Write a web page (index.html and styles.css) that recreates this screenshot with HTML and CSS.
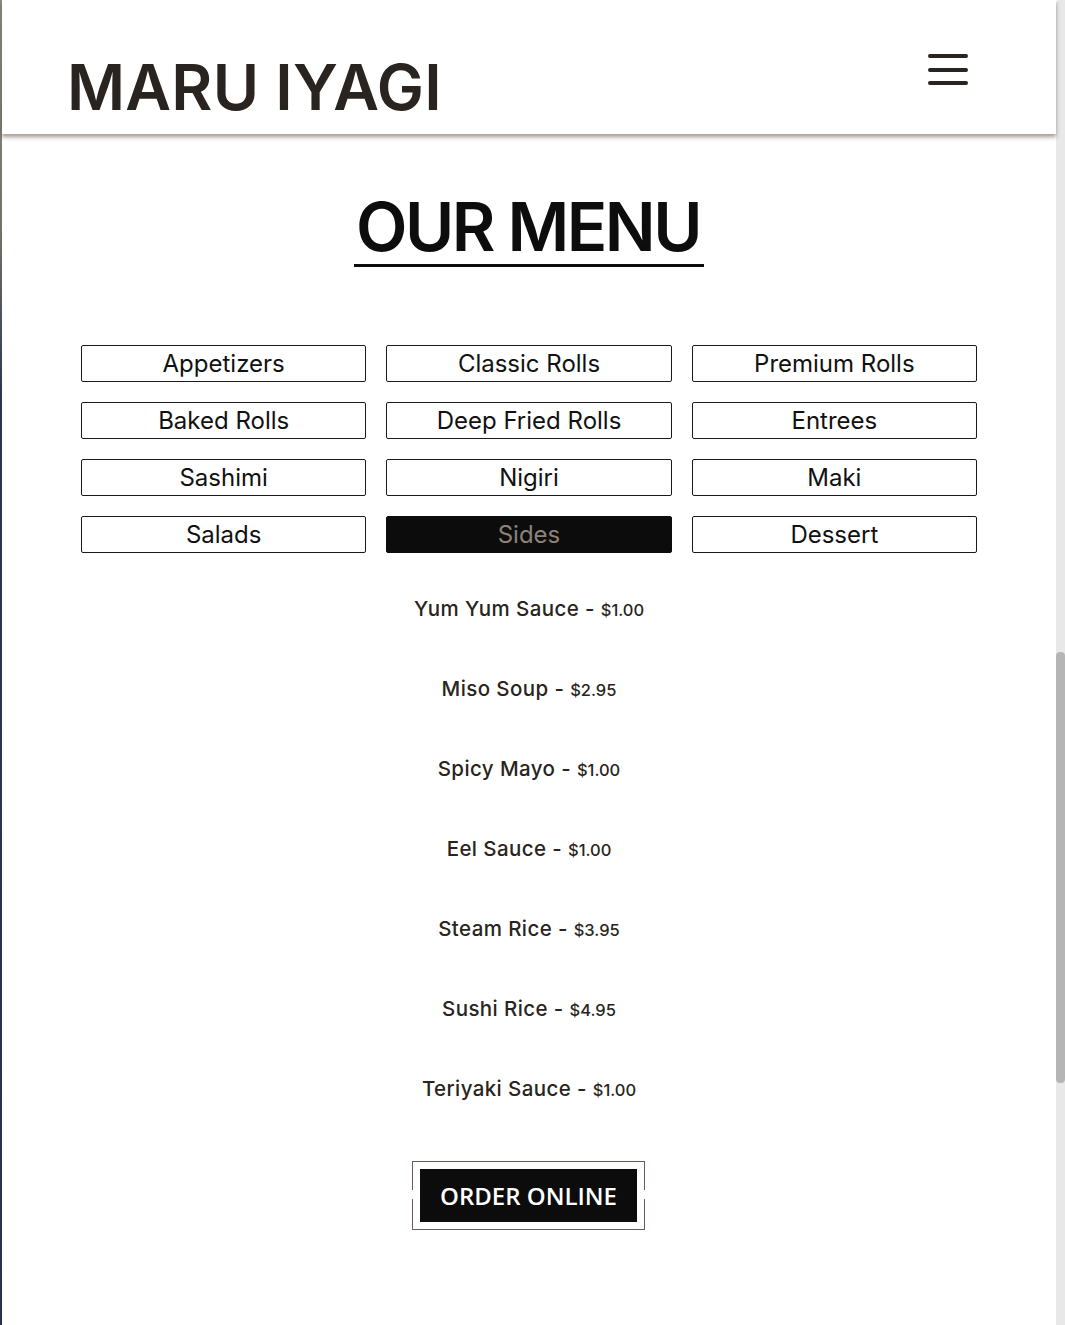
FILE: index.html
```html
<!DOCTYPE html>
<html lang="en">
<head>
  <meta charset="UTF-8">
  <title>Maru Iyagi - Our Menu</title>
  <link rel="stylesheet" href="styles.css">
</head>
<body>

  <div class="ventana">
    <div class="borde"></div>

    <div class="pagina">
      <header class="cabecera">
        <h1 class="logo">MARU IYAGI</h1>
        <button class="hamburguesa" aria-label="Menu">
          <svg width="40" height="31" viewBox="0 0 40 31">
            <line x1="2" y1="2" x2="38" y2="2" />
            <line x1="2" y1="16" x2="38" y2="16" />
            <line x1="2" y1="29" x2="38" y2="29" />
          </svg>
        </button>
      </header>

      <main class="menu">
        <h2 class="titulo">OUR MENU</h2>

        <div class="categorias">
          <button class="categoria">Appetizers</button>
          <button class="categoria">Classic Rolls</button>
          <button class="categoria">Premium Rolls</button>
          <button class="categoria">Baked Rolls</button>
          <button class="categoria">Deep Fried Rolls</button>
          <button class="categoria">Entrees</button>
          <button class="categoria">Sashimi</button>
          <button class="categoria">Nigiri</button>
          <button class="categoria">Maki</button>
          <button class="categoria">Salads</button>
          <button class="categoria activa">Sides</button>
          <button class="categoria">Dessert</button>
        </div>

        <ul class="platos">
          <li><span class="nombre">Yum Yum Sauce - </span><span class="precio">$1.00</span></li>
          <li><span class="nombre">Miso Soup - </span><span class="precio">$2.95</span></li>
          <li><span class="nombre">Spicy Mayo - </span><span class="precio">$1.00</span></li>
          <li><span class="nombre">Eel Sauce - </span><span class="precio">$1.00</span></li>
          <li><span class="nombre">Steam Rice - </span><span class="precio">$3.95</span></li>
          <li><span class="nombre">Sushi Rice - </span><span class="precio">$4.95</span></li>
          <li><span class="nombre">Teriyaki Sauce - </span><span class="precio">$1.00</span></li>
        </ul>

        <div class="pedido">
          <a class="pedir" href="#">ORDER ONLINE</a>
        </div>
      </main>
    </div>

    <div class="barra">
      <div class="pulgar"></div>
    </div>
  </div>

</body>
</html>
```

FILE: styles.css
```css
body {
  margin: 0;
  font-family: Inter, "Noto Sans", sans-serif;
  background-color: #fff;
}

.ventana {
  display: flex;
  height: 1325px;
  overflow: hidden;
}

.borde {
  width: 2px;
  flex-shrink: 0;
  background: linear-gradient(#8d8c84 0%, #6f7266 18%, #2b3454 30%, #26304f 100%);
}

.pagina {
  flex: 1;
  background-color: #fff;
}

/* cabecera */
.cabecera {
  display: flex;
  justify-content: space-between;
  align-items: flex-start;
  height: 134px;
  padding: 0 88px 0 65px;
  background-color: #fff;
  box-shadow: 0 3px 4px rgba(90, 70, 60, 0.55);
  position: relative;
}

.logo {
  margin: 56px 0 0;
  font-size: 63px;
  line-height: 63px;
  font-weight: 600;
  color: #2a2420;
  letter-spacing: 0.2px;
}

.hamburguesa {
  margin-top: 54px;
  padding: 0;
  border: none;
  background: none;
  cursor: pointer;
}

.hamburguesa svg {
  display: block;
}

.hamburguesa line {
  stroke: #2a2420;
  stroke-width: 4;
  stroke-linecap: round;
}

/* menu */
.menu {
  display: flex;
  flex-direction: column;
  align-items: center;
}

.titulo {
  margin: 59px 0 0;
  padding: 0 4px 4px 2px;
  font-size: 67px;
  line-height: 67px;
  font-weight: 600;
  letter-spacing: -2.5px;
  color: #0d0d0d;
  border-bottom: 3px solid #0d0d0d;
}

.categorias {
  display: grid;
  grid-template-columns: repeat(3, 1fr);
  gap: 20px;
  width: 896px;
  margin-top: 78px;
}

.categoria {
  height: 37px;
  padding: 0;
  background-color: #fff;
  border: 1px solid #1a1a1a;
  border-radius: 2px;
  font-family: Inter, "Noto Sans", sans-serif;
  font-size: 24px;
  color: #111;
  cursor: pointer;
}

.categoria.activa {
  background-color: #0c0c0c;
  border-color: #0c0c0c;
  color: #8c8279;
}

.platos {
  list-style: none;
  margin: 16px 0 0;
  padding: 0;
  text-align: center;
}

.platos li {
  height: 80px;
  line-height: 80px;
  color: #2a2420;
}

.nombre {
  font-size: 20.5px;
  font-weight: 500;
  letter-spacing: 0.4px;
  white-space: pre;
}

.precio {
  font-size: 16.5px;
  font-weight: 500;
}

.pedido {
  margin: 32px 1px 0 0;
  padding: 7px;
  border: 1px solid #6b5a55;
  position: relative;
}

.pedido::before,
.pedido::after {
  content: "";
  position: absolute;
  top: 28px;
  width: 1px;
  height: 9px;
  background-color: #fff;
}

.pedido::before {
  left: -1px;
}

.pedido::after {
  right: -1px;
}

.pedir {
  display: block;
  width: 217px;
  height: 53px;
  line-height: 53px;
  text-align: center;
  background-color: #0c0c0c;
  color: #fff;
  font-family: "Open Sans", sans-serif;
  font-size: 24px;
  font-weight: 600;
  text-decoration: none;
}

/* barra de desplazamiento */
.barra {
  width: 9px;
  flex-shrink: 0;
  background-color: #e8e8e8;
  border-top-left-radius: 4px;
}

.pulgar {
  margin-top: 652px;
  height: 431px;
  background-color: #b5b5b5;
  border-radius: 4px;
}
```
